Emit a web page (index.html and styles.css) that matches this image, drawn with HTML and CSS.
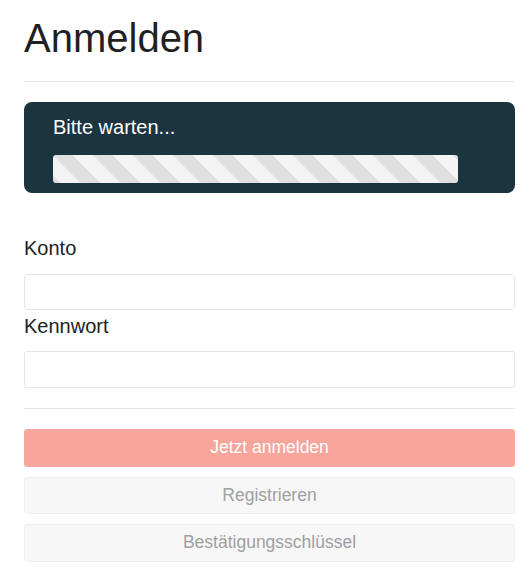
FILE: index.html
```html
<!DOCTYPE html>
<html lang="de">
<head>
<meta charset="utf-8">
<title>Anmelden</title>
<link rel="stylesheet" href="styles.css">
</head>
<body>
<div class="page">
  <h1 class="title">Anmelden</h1>
  <hr class="rule rule-top">
  <div class="alert">
    <div class="alert-text">Bitte warten...</div>
    <div class="progress"></div>
  </div>
  <form class="form">
    <div class="group">
      <label class="label" for="konto">Konto</label>
      <input class="input" id="konto" type="text">
    </div>
    <div class="group group-next">
      <label class="label" for="kennwort">Kennwort</label>
      <input class="input" id="kennwort" type="password">
    </div>
    <hr class="rule rule-form">
    <div class="buttons">
      <button type="button" class="btn btn-primary">Jetzt anmelden</button>
      <button type="button" class="btn btn-default">Registrieren</button>
      <button type="button" class="btn btn-default">Bestätigungsschlüssel</button>
    </div>
  </form>
</div>
</body>
</html>
```

FILE: styles.css
```css
html, body {
  margin: 0;
  padding: 0;
  background: #ffffff;
}
body {
  font-family: "Liberation Sans", Arial, sans-serif;
  color: #222222;
}
.page {
  padding: 0 16px 0 24px;
}
.title {
  margin: 16px 0 0;
  font-size: 40px;
  line-height: 44px;
  font-weight: normal;
  color: #1f1f24;
}
.rule {
  border: 0;
  border-top: 1px solid #e5e5e5;
  height: 0;
  margin: 0;
}
.rule-top {
  margin: 21px 0 20px;
}
.alert {
  background: #1a3440;
  border-radius: 8px;
  padding: 13px 57px 10px 29px;
}
.alert-text {
  color: #ffffff;
  font-size: 20px;
  line-height: 24px;
}
.progress {
  margin-top: 16px;
  height: 28px;
  border-radius: 3px;
  background-color: #f4f4f4;
  background-image: linear-gradient(45deg, #e0e0e0 25%, transparent 25%, transparent 50%, #e0e0e0 50%, #e0e0e0 75%, transparent 75%, transparent);
  background-size: 40px 40px;
}
.form {
  margin: 43px 0 0;
}
.group {
  display: flex;
  flex-direction: column;
}
.group-next {
  margin-top: 3.5px;
}
.label {
  font-size: 20px;
  line-height: 24px;
  color: #222222;
  margin-bottom: 13.5px;
}
.input {
  box-sizing: border-box;
  height: 36.5px;
  width: 100%;
  margin: 0;
  border: 1px solid #e6e6e6;
  border-radius: 3px;
  background: #ffffff;
  font: inherit;
  font-size: 17.5px;
  padding: 0 10px;
}
.rule-form {
  margin: 20.5px 0 20px;
}
.buttons {
  display: flex;
  flex-direction: column;
  gap: 10px;
}
.btn {
  box-sizing: border-box;
  height: 37.5px;
  width: 100%;
  margin: 0;
  border-radius: 3px;
  font-family: "Liberation Sans", Arial, sans-serif;
  font-size: 17.5px;
  line-height: 1;
  padding: 0;
  cursor: default;
}
.btn-primary {
  background: #f8a59c;
  border: 1px solid #f8a59c;
  color: #ffffff;
}
.btn-default {
  background: #f7f7f7;
  border: 1px solid #efefef;
  color: #a0a0a0;
}
```
